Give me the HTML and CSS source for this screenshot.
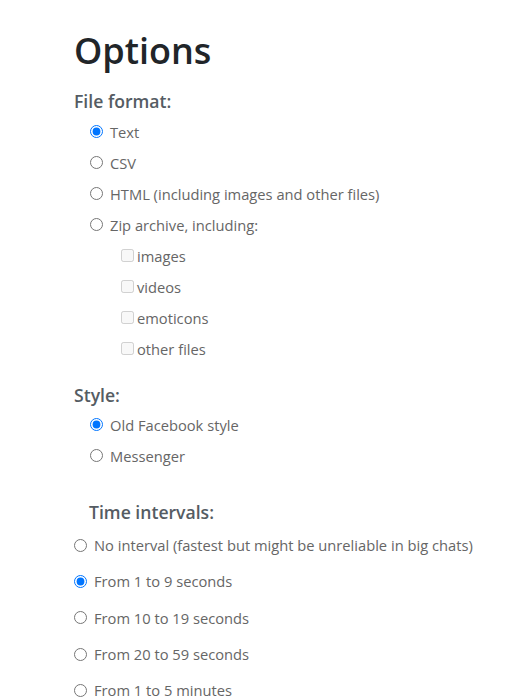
FILE: index.html
```html
<!DOCTYPE html>
<html>
<head>
<meta charset="utf-8">
<link rel="stylesheet" href="styles.css">
</head>
<body>
<div class="page">
  <h1 class="title">Options</h1>
  <h2 class="section">File format:</h2>
  <div class="group">
    <label class="row"><input type="radio" name="fmt" checked> Text</label>
    <label class="row"><input type="radio" name="fmt"> CSV</label>
    <label class="row"><input type="radio" name="fmt"> HTML (including images and other files)</label>
    <label class="row"><input type="radio" name="fmt"> Zip archive, including:</label>
    <div class="sub">
      <label class="row crow"><input type="checkbox" disabled>images</label>
      <label class="row crow"><input type="checkbox" disabled>videos</label>
      <label class="row crow"><input type="checkbox" disabled>emoticons</label>
      <label class="row crow"><input type="checkbox" disabled>other files</label>
    </div>
  </div>
  <h2 class="section style-h">Style:</h2>
  <div class="group group2">
    <label class="row"><input type="radio" name="sty" checked> Old Facebook style</label>
    <label class="row"><input type="radio" name="sty"> Messenger</label>
  </div>
  <h2 class="section time-h">Time intervals:</h2>
  <div class="tgroup">
    <label class="trow"><input type="radio" name="t"> No interval (fastest but might be unreliable in big chats)</label>
    <label class="trow"><input type="radio" name="t" checked> From 1 to 9 seconds</label>
    <label class="trow"><input type="radio" name="t"> From 10 to 19 seconds</label>
    <label class="trow"><input type="radio" name="t"> From 20 to 59 seconds</label>
    <label class="trow"><input type="radio" name="t"> From 1 to 5 minutes</label>
  </div>
</div>
</body>
</html>
```
FILE: styles.css
```css
html, body {
  margin: 0;
  padding: 0;
  background: #fff;
}
body {
  font-family: "Open Sans", "Noto Sans", sans-serif;
  color: #666;
  font-size: 14.7px;
}
.page {
  padding: 27px 0 0 74px;
}
.title {
  margin: 0;
  font-size: 36px;
  font-weight: 600;
  color: #212529;
  line-height: 48px;
}
.section {
  margin: 14px 0 0 0;
  font-size: 17.6px;
  font-weight: 600;
  color: #555c63;
  line-height: 24px;
}
.group {
  display: flex;
  flex-direction: column;
  padding-left: 16px;
  margin-top: 3px;
}
.group2 {
  margin-top: 2px;
}
.row {
  display: flex;
  align-items: center;
  height: 31px;
  gap: 3px;
}
.row input {
  margin: 0 4px 0 0;
  width: 13px;
  height: 13px;
}
.sub {
  display: flex;
  flex-direction: column;
  padding-left: 31px;
}
.crow {
  gap: 0;
}
.crow input {
  margin: 0 3px 0 0;
}
.style-h {
  margin-top: 19px;
}
.time-h {
  margin-top: 29px;
  padding-left: 15px;
}
.tgroup {
  display: flex;
  flex-direction: column;
  margin-top: 3px;
}
.trow {
  display: flex;
  align-items: center;
  height: 36.3px;
}
.trow input {
  margin: 0 7px 0 0;
  width: 13px;
  height: 13px;
}
```
